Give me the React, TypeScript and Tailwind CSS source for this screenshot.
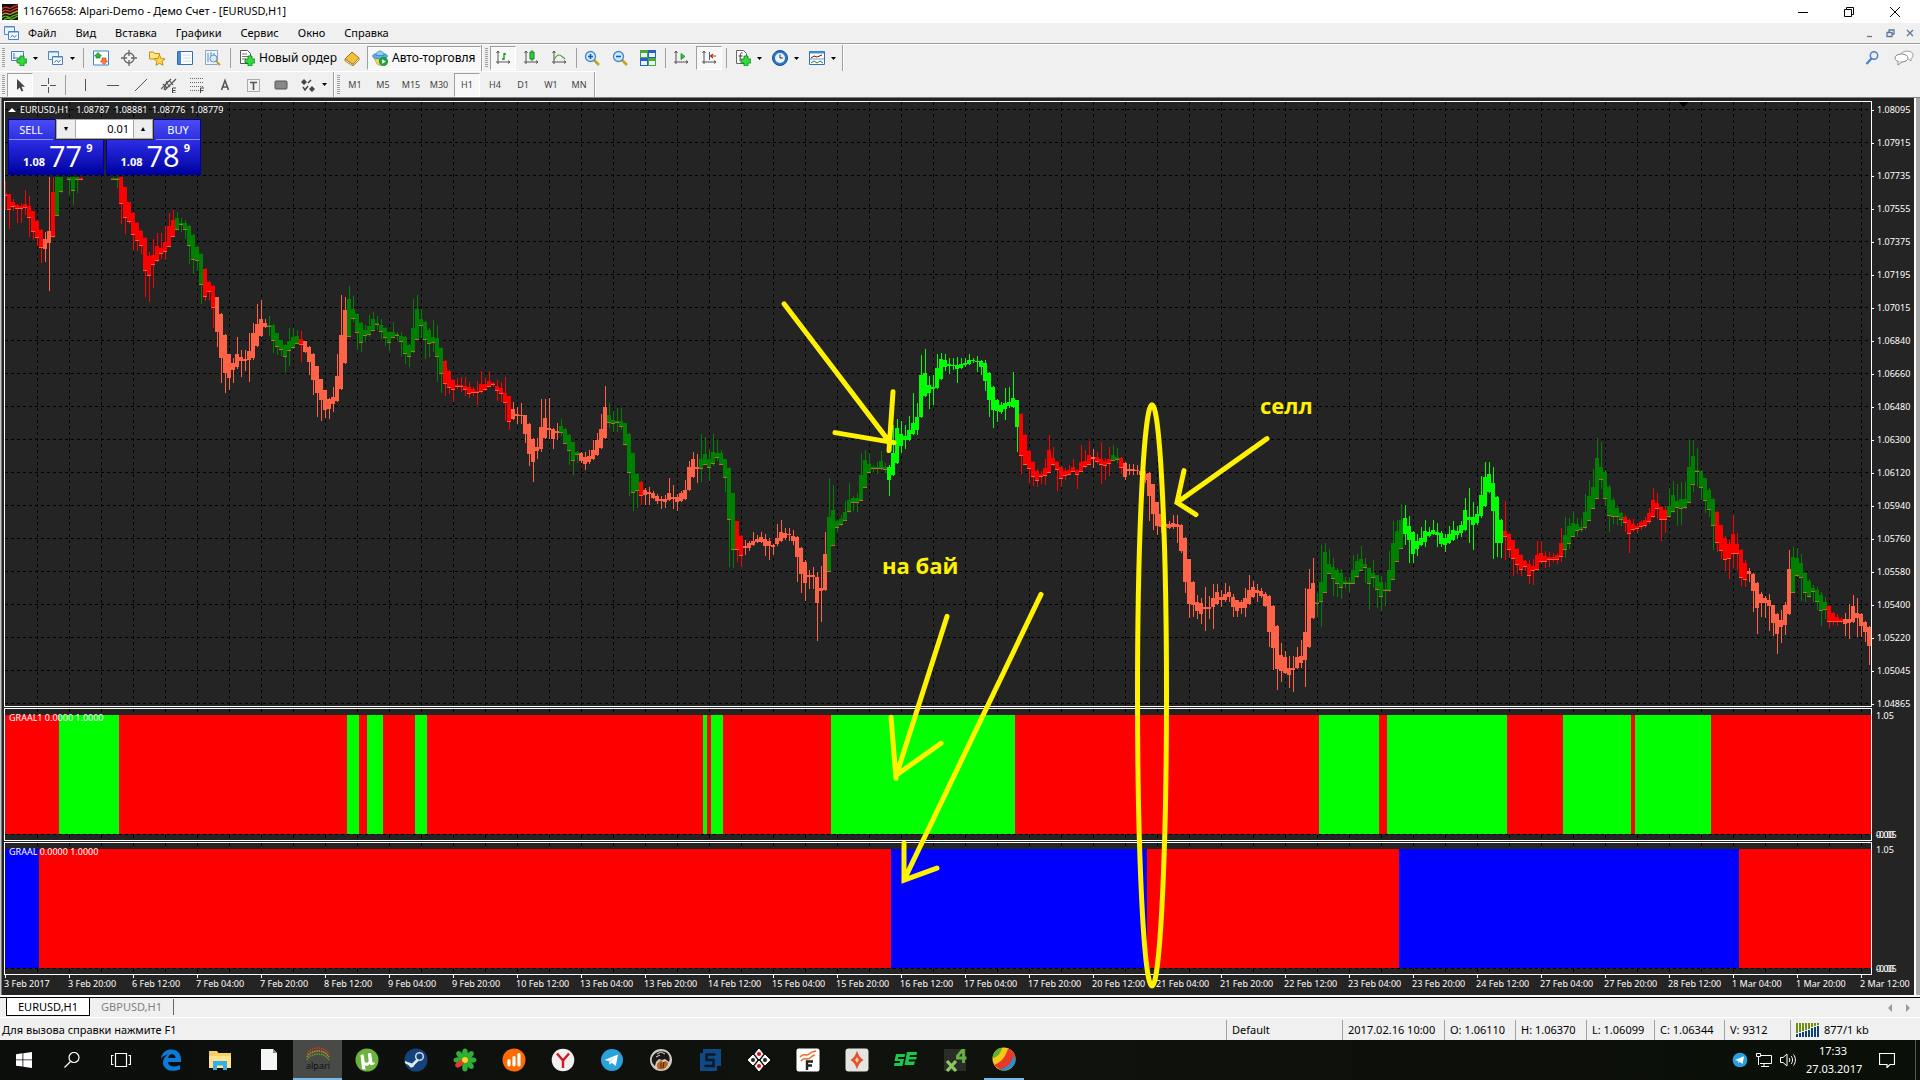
import React from "react";
import clsx from "clsx";

type IconProps = { children: React.ReactNode; className?: string; box?: string };

const Ico: React.FC<IconProps> = ({ children, className = "w-4 h-4", box = "0 0 16 16" }) => (
  <svg className={clsx("shrink-0", className)} viewBox={box} fill="none" aria-hidden="true">
    {children}
  </svg>
);

/* ---------- price data ---------- */

const COLORS = { R: "#ff0000", T: "#ff6347", G: "#008000", L: "#00ff00" };
type Tone = keyof typeof COLORS;

// tone, x of the first bar, then high / body top / body bottom / low for every bar
const RUNS: [Tone, number, string][] = [
  ["R", 5, "181 193 195 210,194 194 209 229,199 202 206 211,204 205 208 223,203 206 208 223,190 204 207 215,196 206 217 237,211 211 231 240,220 221 237 246,229 230 247 263"],
  ["T", 45, "232 239 249 262,177 231 243 291"],
  ["R", 53, "178 192 236 238"],
  ["G", 57, "177 177 215 216,177 177 191 193"],
  ["G", 69, "177 177 179 195,177 177 190 205,177 177 179 193"],
  ["R", 81, "177 178 179 179"],
  ["G", 113, "177 178 179 180,177 178 179 188"],
  ["R", 121, "177 177 203 224,187 187 217 234,202 202 221 224,212 213 234 250,222 223 240 251,230 231 245 254,237 238 270 297,252 256 275 302,239 255 264 288,233 246 260 262,233 248 253 259,226 242 251 260,213 226 246 247,210 220 236 237"],
  ["G", 177, "212 218 229 230,218 223 224 232,220 223 229 239,225 226 245 264,234 235 259 274,246 247 260 271,253 254 284 304"],
  ["R", 205, "268 269 296 301,281 282 291 300,285 286 307 328"],
  ["T", 217, "297 297 332 347,313 314 358 383,334 335 373 393,354 354 378 390,358 363 370 383,337 354 367 369,350 357 361 377,350 359 361 371,333 351 360 382,323 333 358 360,304 324 346 347,300 319 336 337,319 323 327 328"],
  ["G", 269, "316 325 326 336,324 325 340 353,333 333 346 355,340 340 349 356,344 345 356 372,328 341 350 366,328 337 347 349,330 336 343 344"],
  ["R", 301, "331 339 344 362"],
  ["T", 305, "341 341 352 353,346 347 362 375,353 354 380 395,366 366 393 417,379 379 400 421,390 390 410 418,398 399 409 419,387 397 404 412,354 376 401 402,295 335 389 390,297 310 363 364"],
  ["G", 349, "286 299 336 337,296 309 318 322,313 314 332 350,322 323 342 352,325 330 335 342,315 326 334 337,312 319 330 331,316 323 324 330,319 325 331 339,327 328 337 346,331 332 342 351,322 332 337 338,332 334 335 341,332 336 341 356,336 337 353 364,344 345 356 367,299 328 351 353,295 309 339 340,309 319 325 338,321 322 339 359,328 330 343 357,320 337 342 352,325 338 356 382,347 348 373 393"],
  ["R", 445, "360 361 383 396,370 371 387 394,379 380 389 402,378 385 386 389,377 385 386 392,377 386 389 396,382 387 393 398,387 389 392 396,381 391 392 405,371 384 391 394,378 384 389 391,371 381 386 387,382 383 384 387,380 386 390 401,382 388 393 402,377 393 402 421,396 396 421 430"],
  ["T", 513, "402 409 419 420,407 414 416 424,403 415 416 424,415 415 434 443,423 424 454 466,438 439 462 482,438 447 451 459,399 427 449 452,399 418 438 439,398 428 430 439,428 429 439 449,423 431 433 440"],
  ["G", 561, "419 426 432 436,428 429 443 444,434 435 450 465,442 442 460 475,451 452 454 463"],
  ["T", 581, "452 453 461 463,452 457 464 470,450 456 462 464,440 450 459 460,433 440 455 456,414 429 448 449,386 407 438 439"],
  ["G", 609, "403 415 422 428,411 420 423 432,408 421 422 432,408 421 426 430,423 423 444 446,433 434 472 496,453 453 492 511,473 474 490 508"],
  ["R", 641, "481 482 495 505"],
  ["T", 645, "488 490 495 505,487 492 494 505,491 493 498 499,494 496 501 504,496 499 501 509,495 499 502 508,478 493 500 501,485 497 499 509,494 497 502 511,491 493 501 502,480 490 499 500,461 467 490 491,452 459 477 478,454 467 469 483"],
  ["G", 701, "434 459 468 482,437 454 464 465,450 459 467 481,434 452 463 466,440 453 457 461,450 453 464 465,459 459 477 492,467 468 519 567,493 493 549 568"],
  ["R", 737, "521 521 549 562,535 536 555 567"],
  ["T", 745, "540 546 548 555,541 543 548 551,532 541 545 546,535 539 542 543,532 537 542 543,534 539 546 556,538 541 546 560,544 545 547 555,524 538 544 546,520 532 541 542,528 533 538 540,528 534 535 541,530 536 541 545,536 537 557 582,547 548 574 593,560 562 583 601,570 575 577 589,567 575 577 589,572 577 603 641,566 588 591 622,532 554 590 591"],
  ["G", 829, "478 517 571 572,485 510 545 546,520 521 527 532,515 519 524 526,501 512 520 521,483 500 511 513,496 498 502 511,493 498 502 512,453 475 500 501,450 460 487 488,453 464 472 473,465 467 468 472,462 467 468 474,451 461 468 470,463 467 469 473"],
  ["L", 889, "465 467 480 496,425 453 475 476,419 428 463 464,421 434 446 453,425 436 440 449,416 430 440 441,393 423 434 435,403 417 430 435,355 375 417 418,349 373 396 397,376 385 393 409,375 387 389 405,354 368 388 389,353 359 379 380,354 360 367 371,358 364 366 374,358 365 366 370,357 365 369 383,358 364 368 369,358 363 365 367,354 360 364 365,358 360 361 363,356 361 362 372,360 361 367 375,360 363 381 391,372 373 400 417,386 387 410 428,399 400 411 422,402 405 412 414,388 403 409 420,387 402 406 408,372 398 407 408,400 400 427 452"],
  ["R", 1021, "413 414 455 474,434 435 464 465,450 451 468 483,461 462 476 486,469 471 480 487,471 474 476 484,459 468 475 485,435 450 472 473,447 458 464 466,461 462 469 491,466 467 478 487,468 471 475 480,465 470 474 475,459 467 471 472,469 470 474 489,445 462 471 472,450 461 466 468,441 455 464 465"],
  ["T", 1093, "449 457 459 468"],
  ["R", 1097, "452 457 461 464,442 459 464 484,458 461 465 480,447 459 463 476"],
  ["G", 1113, "445 455 460 461,448 457 459 463"],
  ["R", 1121, "457 458 467 474"],
  ["T", 1125, "462 463 477 480,464 469 471 475,464 469 471 475,465 470 471 475,463 471 475 479,471 474 480 483,472 473 496 521,484 484 514 530,502 502 526 535,513 514 527 533,517 524 527 533,521 524 528 529,515 523 527 529,515 524 527 543,524 525 551 553,537 538 582 593,559 559 604 618,581 582 605 617,595 602 611 619,598 603 614 624,587 607 609 631,596 607 609 619,584 598 607 629,584 592 604 605,590 597 600 607,583 594 600 602,586 592 597 602,594 597 607 617,600 600 611 617,600 602 608 614,588 598 608 617,575 590 604 605,581 587 597 598,584 590 593 602,588 591 596 598,592 594 606 607,595 596 632 647,605 606 648 670,625 626 669 690,643 655 671 682,651 657 673 674,656 668 675 688,656 668 670 692,647 657 668 669,640 656 663 668,588 632 660 687,569 589 647 648,558 583 618 619"],
  ["G", 1317, "593 602 603 617,545 582 601 627,543 552 592 593,549 564 573 574,558 567 578 596,568 570 583 597,569 573 587 599,577 581 583 588,577 582 583 592,555 570 583 584,554 561 576 578,546 559 570 571,558 564 567 583,567 568 583 610,560 573 577 588,575 575 589 608,576 582 596 611,582 589 590 606,551 570 590 592,521 543 579 580,520 531 561 562,504 520 548 549"],
  ["L", 1405, "505 518 534 545,516 526 540 563,531 532 554 563,534 541 549 556,527 538 545 546,520 531 542 547,527 532 536 537,520 530 534 535,523 532 535 547,531 533 544 547,534 538 545 552,526 534 543 544,521 530 540 541,526 531 535 539,521 525 533 537,498 510 530 531,488 517 520 543,502 517 525 550,506 514 523 525,476 495 516 518,462 477 506 507,462 474 492 493,467 483 511 559,496 497 543 557,519 520 543 558"],
  ["R", 1505, "501 531 536 560,533 534 549 558,540 540 558 576,548 549 564 574,554 555 569 576,560 561 566 571,560 564 575 584,559 566 570 585,541 555 569 571,541 553 561 564,551 556 561 568,552 557 559 567,553 557 559 562,553 555 559 564,528 543 556 562"],
  ["G", 1565, "517 535 549 558,518 526 543 549,511 523 536 537,518 524 530 537,519 527 529 532,494 512 527 530,480 496 520 521,469 487 508 509,438 458 498 499,442 467 479 489,470 472 498 506,485 487 515 532,498 500 516 524,506 508 516 525,512 513 519 526"],
  ["R", 1625, "515 517 522 532,519 520 533 553,519 524 529 532,523 526 528 533,520 522 526 530,517 520 525 528,508 513 521 524,488 500 516 518,493 503 508 519,506 507 519 541,506 510 519 533"],
  ["G", 1669, "488 506 516 518,481 495 511 513,484 501 507 526,482 499 508 525,482 499 507 509,440 467 502 503,440 456 484 492,448 470 471 487,470 471 487 500,478 478 500 513,488 490 509 517,498 499 525 550"],
  ["R", 1717, "511 512 542 552,525 525 550 559,536 538 559 571,539 544 558 579,515 534 553 568,533 544 553 570,549 550 577 586,560 563 579 587"],
  ["T", 1749, "568 571 574 582,573 574 591 612,582 583 608 634,592 594 603 617,596 598 603 618,594 600 606 631,605 605 623 636,613 614 634 654,610 620 627 643,602 605 625 635,550 569 614 615"],
  ["G", 1793, "547 557 592 593,548 558 575 577,554 563 577 601,572 573 592 602,579 581 596 598,585 588 591 602,587 590 601 610,592 595 610 626,597 602 609 619"],
  ["R", 1829, "605 606 621 628,612 613 621 625,614 617 621 626,617 619 621 623"],
  ["T", 1845, "613 619 624 636,604 619 623 639,595 606 622 623,598 613 618 637,613 614 626 637,621 622 632 642,626 627 646 665"],
];

const BARS = RUNS.flatMap(([tone, start, data]) =>
  data.split(",").map((bar, i) => {
    const [high, top, bottom, low] = bar.split(" ").map(Number);
    return { tone, x: start + i * 4, high, top, bottom, low };
  })
);

const GRID_X = Array.from({ length: 58 }, (_, i) => 37 + i * 32);
const GRID_Y = Array.from({ length: 19 }, (_, i) => 109 + i * 33);

const PRICES = [
  "1.08095", "1.07915", "1.07735", "1.07555", "1.07375", "1.07195", "1.07015", "1.06840", "1.06660", "1.06480",
  "1.06300", "1.06120", "1.05940", "1.05760", "1.05580", "1.05400", "1.05220", "1.05045", "1.04865",
];

const TIMES = [
  "3 Feb 2017", "3 Feb 20:00", "6 Feb 12:00", "7 Feb 04:00", "7 Feb 20:00", "8 Feb 12:00", "9 Feb 04:00", "9 Feb 20:00",
  "10 Feb 12:00", "13 Feb 04:00", "13 Feb 20:00", "14 Feb 12:00", "15 Feb 04:00", "15 Feb 20:00", "16 Feb 12:00",
  "17 Feb 04:00", "17 Feb 20:00", "20 Feb 12:00", "21 Feb 04:00", "21 Feb 20:00", "22 Feb 12:00", "23 Feb 04:00",
  "23 Feb 20:00", "24 Feb 12:00", "27 Feb 04:00", "27 Feb 20:00", "28 Feb 12:00", "1 Mar 04:00", "1 Mar 20:00", "2 Mar 12:00",
];

const GRAAL1: [number, number][] = [
  [59, 119], [347, 359], [367, 383], [415, 427], [703, 707], [711, 723], [831, 1015],
  [1319, 1379], [1387, 1507], [1563, 1631], [1635, 1711],
];
const GRAAL: [number, number][] = [[5, 39], [891, 1147], [1399, 1739]];

/* ---------- chart ---------- */

const PriceChart = () => (
  <svg className="block w-full h-[604px]" viewBox="5 102 1866 604" preserveAspectRatio="none" shapeRendering="crispEdges">
    <g stroke="#000" strokeDasharray="3 3">
      {GRID_X.map((x) => (
        <path key={x} d={`M${x + 0.5} 102V706`} />
      ))}
      {GRID_Y.map((y) => (
        <path key={y} d={`M5 ${y + 0.5}H1871`} />
      ))}
    </g>
    <path d="M1679 102h9l-4.500 5z" fill="#000" />
    {BARS.map((b) => (
      <g key={b.x} fill={COLORS[b.tone]}>
        <rect x={b.x} y={b.high} width="1" height={b.low - b.high} />
        <rect x={b.x - 2} y={b.top} width="4" height={Math.max(1, b.bottom - b.top)} />
        {(b.tone === "G" || b.tone === "R") && (
          <rect x={b.x - 2} y={b.bottom} width="4" height="1" fill={b.tone === "G" ? "#b07030" : "#ff5a3c"} />
        )}
      </g>
    ))}
  </svg>
);

type PaneProps = { name: string; base: string; mark: string; zones: [number, number][] };

const IndicatorPane: React.FC<PaneProps> = ({ name, base, mark, zones }) => (
  <div className="flex h-[133px] mt-px">
    <div className="relative flex-1 border border-white">
      <svg className="block w-full h-[131px]" viewBox="5 0 1866 131" preserveAspectRatio="none" shapeRendering="crispEdges">
        <g stroke="#000" strokeDasharray="3 3">
          {GRID_X.map((x) => (
            <path key={x} d={`M${x + 0.5} 0V131`} />
          ))}
          <path d="M5 125.500H1871" />
        </g>
        <rect x="5" y="6" width="1866" height="119" fill={base} />
        {zones.map(([from, to]) => (
          <rect key={from} x={from} y="6" width={to - from} height="119" fill={mark} />
        ))}
      </svg>
      <span className="absolute left-1 top-px text-[9px] leading-4">{name} 0.0000 1.0000</span>
    </div>
    <div className="w-[42px] flex flex-col justify-between pt-0.5 text-[9px] leading-3 pl-1">
      <span>1.05</span>
      <span className="grid">
        <span className="[grid-area:1/1]">0.00</span>
        <span className="[grid-area:1/1]">-0.05</span>
      </span>
    </div>
  </div>
);

const Annotations = () => (
  <div className="absolute inset-0 pointer-events-none text-[#fff200]">
    <svg className="w-full h-full" viewBox="0 97 1920 898" preserveAspectRatio="none" fill="none" stroke="#fff200" strokeWidth="5" strokeLinecap="round">
      <path d="M784 303L890 442M893 391L889 450M835 432L894 442" />
      <path d="M1267 438L1177 502M1184 470L1177 502L1196 514" />
      <path d="M947 616L896 776M891 717L896 778M896 775L941 743" />
      <path d="M1041 594L904 880M904 843V880L937 868" />
      <ellipse cx="1152" cy="695" rx="14.500" ry="291" />
    </svg>
    <span className="absolute left-[65.620%] top-[293px] text-[22px] leading-7 font-bold font-['Open_Sans',sans-serif]">селл</span>
    <span className="absolute left-[45.940%] top-[453px] text-[22px] leading-7 font-bold font-['Open_Sans',sans-serif]">на бай</span>
  </div>
);

const TradePanel = () => (
  <div className="absolute left-[3px] top-[17px] w-[193px] h-14 grid grid-cols-2 gap-x-0.5 text-white">
    {[
      { side: "SELL", pips: "77" },
      { side: "BUY", pips: "78" },
    ].map(({ side, pips }) => (
      <button
        key={side}
        aria-label={side}
        className="flex flex-col border border-[#0000a8] bg-linear-to-b from-[#4a4af5] via-[#2323d8] to-[#0000a0]"
      >
        <span className={clsx("w-[44px] h-5 text-[11px] leading-5 text-center border-b border-[#8c8cff]", side === "BUY" && "self-end")}>
          {side}
        </span>
        <span className="flex items-end justify-center w-full h-8 gap-1 pl-1">
          <b className="text-[11px] leading-5">1.08</b>
          <span className="text-[29px] leading-8 font-['Open_Sans',sans-serif]">{pips}</span>
          <b className="text-[11px] leading-4 self-start">9</b>
        </span>
      </button>
    ))}
    <div className="absolute left-[47px] top-0 w-[99px] h-[21px] bg-[#242424] px-px pb-px flex text-black">
      <button aria-label="Меньше" className="w-5 bg-[#eee] border border-[#a8a8a8] text-[7px] leading-4">
        ▼
      </button>
      <input aria-label="Объем" defaultValue="0.01" className="w-0 flex-1 bg-white border-y border-[#a8a8a8] text-right text-[11px] pr-1 outline-none" />
      <button aria-label="Больше" className="w-5 bg-[#eee] border border-[#a8a8a8] text-[7px] leading-4">
        ▲
      </button>
    </div>
  </div>
);

const ChartWindow = () => (
  <main className="relative bg-[#242424] text-white border-t border-[#808080] pt-[3px] pr-1.5">
    <div className="absolute left-0 inset-y-0 w-0.5 bg-[#c8c8c8] border-r border-[#777]" />
    <div className="absolute right-0 inset-y-0 w-1.5 bg-[#a9a9a9] border-l-2 border-white" />
    <div className="pl-1">
      <div className="flex h-[606px]">
        <div className="relative flex-1 border border-white">
          <PriceChart />
          <span className="absolute left-[3px] top-0 text-[9px] leading-4 flex items-center gap-1">
            <Ico className="w-2 h-1" box="0 0 8 4">
              <path d="M0 4L4 0l4 4z" fill="#fff" />
            </Ico>
            <span className="whitespace-pre">EURUSD,H1   1.08787  1.08881  1.08776  1.08779</span>
          </span>
          <TradePanel />
        </div>
        <div className="w-[42px] pt-[3px] flex flex-col gap-[21px] text-[9px] leading-3">
          {PRICES.map((p) => (
            <span key={p} className="flex items-center gap-[3px] h-3">
              <i className="w-0.5 h-px bg-white" />
              {p}
            </span>
          ))}
        </div>
      </div>
      <IndicatorPane name="GRAAL1" base="#ff0000" mark="#00ff00" zones={GRAAL1} />
      <IndicatorPane name="GRAAL" base="#ff0000" mark="#0000ff" zones={GRAAL} />
      <div className="grid grid-cols-[repeat(29,minmax(0,64fr))_53fr] h-5 pl-px text-[9px] leading-3 whitespace-nowrap">
        {TIMES.map((t) => (
          <div key={t}>
            <i className="block w-px h-[3px] bg-white" />
            <span className="-ml-px">{t}</span>
          </div>
        ))}
      </div>
    </div>
    <Annotations />
  </main>
);

/* ---------- tool bars ---------- */

const Plus = () => <path d="M9 6h4v3h3v4h-3v3H9v-3H6V9h3z" fill="#2fdc3a" stroke="#12801c" strokeWidth=".8" />;
const Axes = () => <path d="M3 1v13M1 12h14M1.500 3L3 1l1.500 2M13 10.500l2 1.500-2 1.500" stroke="#555" />;

const Caret = () => (
  <Ico className="w-[5px] h-[3px]" box="0 0 5 3">
    <path d="M0 0h5L2.500 3z" fill="#000" />
  </Ico>
);
const Grip = () => <i className="w-[3px] h-5 mx-0.5 shrink-0 bg-[repeating-linear-gradient(#a0a0a0_0_1px,#f0f0f0_1px_2px)]" />;
const Sep = () => <i className="w-px h-5 mx-0.5 shrink-0 bg-[#a0a0a0]" />;
const End = () => <i className="w-0.5 self-stretch shrink-0 border-l border-[#a0a0a0] bg-white" />;

type ToolProps = { label: string; on?: boolean; wide?: boolean; children: React.ReactNode };

const Tool: React.FC<ToolProps> = ({ label, on, wide, children }) => (
  <button
    aria-label={label}
    className={clsx(
      "h-6 shrink-0 flex items-center justify-center gap-1.5 border",
      wide ? "w-[37px] pr-0.5" : "w-[26px] mr-0.5",
      on ? "bg-[#f8f8f8] border-t-[#a0a0a0] border-l-[#a0a0a0] border-white" : "border-transparent"
    )}
  >
    {children}
  </button>
);

const Zoom: React.FC<{ plus?: boolean }> = ({ plus }) => (
  <Ico>
    <path d="M10 10l5 5" stroke="#c8a020" strokeWidth="2.500" />
    <circle cx="6.500" cy="6.500" r="5" fill="#cdeaff" stroke="#4a88c4" strokeWidth="1.300" />
    <path d={plus ? "M4 6.500h5M6.500 4v5" : "M4 6.500h5"} stroke="#1a5fa8" strokeWidth="1.600" />
  </Ico>
);

const Windows: React.FC = () => (
  <Ico>
    <path d="M.5 1.500h10v8H.5z" fill="#eaf4fd" stroke="#5588b8" />
    <path d="M4.500 6.500h10v8h-10z" fill="#f4faff" stroke="#4a80b8" />
    <path d="M1 2.500h9M5 7.500h9" stroke="#9cc4e8" />
    <path d="M6.500 12.500l2-2.500 2 2.500 2-2.500" stroke="#4a80b8" />
  </Ico>
);

const StandardBar = () => (
  <div className="flex items-center h-[27px] border-t border-white text-[12px] text-black">
    <Grip />
    <Tool label="Новый график" wide>
      <Ico>
        <path d="M.5 1.500h12v9H.5z" fill="#eef6ff" stroke="#4a7fb0" />
        <path d="M3 3v6M2 8h8" stroke="#4a7fb0" />
        <Plus />
      </Ico>
      <Caret />
    </Tool>
    <Tool label="Профили" wide>
      <Windows />
      <Caret />
    </Tool>
    <Sep />
    <div className="flex pl-0.5">
      <Tool label="Обзор рынка">
        <Ico>
          <path d="M.5 1h15v14H.5z" fill="#fff" stroke="#3f86c8" />
          <path d="M3 8V6H1.500L5 2.500 8.500 6H7v2z" fill="#2fb83a" stroke="#126b1a" strokeWidth=".6" />
          <path d="M9 8v3H7.500l3.500 3.500 3.500-3.500H13V8z" fill="#ff7a3a" stroke="#b03010" strokeWidth=".6" />
        </Ico>
      </Tool>
      <Tool label="Окно данных">
        <Ico>
          <circle cx="8" cy="8" r="5" stroke="#666" strokeWidth="1.300" />
          <path d="M8 0v6M8 10v6M0 8h6M10 8h6" stroke="#666" strokeWidth="1.300" />
        </Ico>
      </Tool>
      <Tool label="Навигатор">
        <Ico>
          <path d="M.5 2h4l1 1.500h5V9H.5z" fill="#ffe680" stroke="#c09018" />
          <path d="M10.500 5l1.700 3.500 3.800.4-2.800 2.500.8 3.900-3.500-2-3.500 2 .8-3.900L5 8.900l3.800-.4z" fill="#ffd840" stroke="#b07810" strokeWidth=".8" />
        </Ico>
      </Tool>
      <Tool label="Терминал">
        <Ico>
          <path d="M.5 1.500h15v13H.5z" fill="#fff" stroke="#2f6fb0" />
          <path d="M1 2h3v12H1z" fill="#4a8ad0" />
          <path d="M6 5h8M6 8h8M6 11h8" stroke="#c4dcf2" />
        </Ico>
      </Tool>
      <Tool label="Тестер стратегий">
        <Ico>
          <path d="M.5.5h12v14H.5z" fill="#eef4fa" stroke="#8aa8c4" />
          <path d="M3 3v9M6 2v5M9 3v4" stroke="#5588b8" />
          <path d="M11 11l4 4" stroke="#c8a020" strokeWidth="2" />
          <circle cx="8.500" cy="8.500" r="3.500" fill="#d6ecff" stroke="#5a90c0" />
        </Ico>
      </Tool>
    </div>
    <Sep />
    <button className="flex items-center gap-1 w-[104px] pl-1.5 mr-0.5 whitespace-nowrap text-[12px]">
      <Ico>
        <path d="M1.500.5h7l3 3v10h-10z" fill="#fff" stroke="#555" />
        <path d="M3 4h5M3 6.500h6M3 9h4" stroke="#777" />
        <Plus />
      </Ico>
      Новый ордер
    </button>
    <Tool label="MetaEditor">
      <Ico>
        <path d="M1 9l7-7 7 6-6 6.500z" fill="#f0c040" stroke="#a07010" />
        <path d="M1 9v2l8 5v-1.500zM9 16l6-6V8" fill="#fff2c0" stroke="#a07010" strokeWidth=".8" />
      </Ico>
    </Tool>
    <button className="flex items-center gap-1 w-[114px] h-6 px-1 whitespace-nowrap text-[12px] bg-[#f8f8f8] border border-white border-t-[#a0a0a0] border-l-[#a0a0a0]">
      <Ico>
        <path d="M2 8h12l-3 6-3 1.500L5 14z" fill="#f6d860" stroke="#b08a20" strokeWidth=".6" />
        <ellipse cx="8" cy="6" rx="7.500" ry="3" fill="#5ab0e8" stroke="#2a70a8" strokeWidth=".6" />
        <path d="M4 5.500c0-6 8-6 8 0z" fill="#8cd0f6" stroke="#2a70a8" strokeWidth=".6" />
        <circle cx="11.500" cy="11.500" r="4.200" fill="#20a838" stroke="#0f7020" strokeWidth=".6" />
        <path d="M10.200 9.200l3.500 2.300-3.500 2.300z" fill="#fff" />
      </Ico>
      Авто-торговля
    </button>
    <End />
    <Grip />
    <Tool label="Бары" on>
      <Ico>
        <Axes />
        <path d="M9 3v7M9 4h2M7 9h2" stroke="#109020" strokeWidth="1.300" />
      </Ico>
    </Tool>
    <Tool label="Японские свечи">
      <Ico>
        <Axes />
        <path d="M9 0v11" stroke="#108020" />
        <path d="M7 2h4v7H7z" fill="#30d040" stroke="#108020" />
      </Ico>
    </Tool>
    <Tool label="Линия">
      <Ico>
        <Axes />
        <path d="M3 10c3-6 5-7 11-1" stroke="#4a9a50" strokeWidth="1.200" />
      </Ico>
    </Tool>
    <Sep />
    <Tool label="Увеличить">
      <Zoom plus />
    </Tool>
    <Tool label="Уменьшить">
      <Zoom />
    </Tool>
    <Tool label="Окна мозаикой">
      <Ico>
        <path d="M0 0h8v8H0zM8 8h8v8H8z" fill="#4aa83a" />
        <path d="M8 0h8v8H8zM0 8h8v8H0z" fill="#2a5fc8" />
        <path d="M1 3h6v4H1zM9 3h6v4H9zM1 11h6v4H1zM9 11h6v4H9z" fill="#e8f2ff" />
      </Ico>
    </Tool>
    <Sep />
    <Tool label="Автопрокрутка">
      <Ico>
        <Axes />
        <path d="M8 3.500v6l4-3z" fill="#30c040" stroke="#108020" strokeWidth=".7" />
      </Ico>
    </Tool>
    <Tool label="Сдвиг графика" on>
      <Ico>
        <Axes />
        <path d="M8.500 2v8" stroke="#3060a0" />
        <path d="M15 6h-5M12 4l-2.500 2L12 8" stroke="#c03010" strokeWidth="1.200" />
      </Ico>
    </Tool>
    <Sep />
    <div className="flex pl-0.5">
      <Tool label="Индикаторы" wide>
        <Ico>
          <path d="M1.500.5h7l3 3v10h-10z" fill="#fff" stroke="#666" />
          <path d="M7.500 3C5 2 5.500 5 5 11M3.500 6h4" stroke="#333" />
          <Plus />
        </Ico>
        <Caret />
      </Tool>
      <Tool label="Периоды" wide>
        <Ico>
          <circle cx="8" cy="8" r="7.500" fill="#2a78c8" stroke="#10508c" />
          <circle cx="8" cy="8" r="5" fill="#e8f4ff" />
          <path d="M8 4.500V8h3" stroke="#333" />
        </Ico>
        <Caret />
      </Tool>
      <Tool label="Шаблоны" wide>
        <Ico>
          <path d="M.5 1.500h15v13H.5z" fill="#fff" stroke="#2f70b0" />
          <path d="M1 2.500h14" stroke="#4a90d0" strokeWidth="2" />
          <path d="M2 8l3-2 3 1 5-2" stroke="#602010" />
          <path d="M1 9h14" stroke="#2f70b0" strokeWidth=".7" />
          <path d="M2 13l3-2 3 2 3-2 3 2" stroke="#208030" />
        </Ico>
        <Caret />
      </Tool>
    </div>
    <End />
    <div className="flex ml-auto items-center gap-3.5 pr-1.5">
      <button aria-label="Поиск">
        <Ico>
          <circle cx="10" cy="5.500" r="3.700" stroke="#4a80c8" strokeWidth="1.500" />
          <path d="M7.500 8.500L2.500 14" stroke="#4a80c8" strokeWidth="2.200" />
        </Ico>
      </button>
      <button aria-label="Чат">
        <Ico className="w-5 h-4" box="0 0 20 16">
          <path d="M7 4c2-4 12-4 12 1 0 2-1 3-2 3.500V11l-2.500-2" fill="#fff" stroke="#999" />
          <ellipse cx="7.500" cy="8" rx="6.500" ry="4" fill="#fff" stroke="#888" />
          <path d="M4 11v4l4-3" fill="#fff" stroke="#888" />
        </Ico>
      </button>
    </div>
  </div>
);

const DRAWINGS: { label: string; art: React.ReactNode }[] = [
  { label: "Вертикальная линия", art: <path d="M8.500 2v12" stroke="#555" /> },
  { label: "Горизонтальная линия", art: <path d="M2 8.500h12" stroke="#555" /> },
  { label: "Трендовая линия", art: <path d="M2 14L14 2" stroke="#555" /> },
  {
    label: "Канал",
    art: (
      <>
        <path d="M0 12L10 2M4 13L15 2M2 7l4 4M5 5l4 5M8 3l4 5M3 13L6 4" stroke="#555" strokeWidth="1.200" />
        <path d="M15 11h-3.500v5H15M11.500 13.500h3" stroke="#444" />
      </>
    ),
  },
  {
    label: "Фибоначчи",
    art: (
      <>
        <path d="M1 1.500h14M1 5.500h14M1 9.500h14M1 13.500h9" stroke="#666" strokeDasharray="1 1" />
        <path d="M11.500 16v-5H15M11.500 13.500h3" stroke="#444" />
      </>
    ),
  },
  { label: "Текст", art: <path d="M4.500 13L8 3.500 11.500 13M5.500 10h5" stroke="#555" strokeWidth="1.600" /> },
  {
    label: "Текстовая метка",
    art: (
      <>
        <path d="M2.500 2.500h12v12h-12z" stroke="#666" strokeDasharray="1 1" />
        <path d="M5 5.500h7M8.500 5.500V13" stroke="#555" strokeWidth="1.600" />
      </>
    ),
  },
  { label: "Прямоугольник", art: <rect x="2" y="4" width="12" height="8" rx="1" fill="#888" stroke="#555" /> },
];

const PERIODS = ["M1", "M5", "M15", "M30", "H1", "H4", "D1", "W1", "MN"];

const LineBar = () => (
  <div className="flex h-[26px]">
    <div className="flex items-center border-t border-white">
      <Grip />
      <Tool label="Курсор" on>
        <Ico>
          <path d="M5 2v11l2.700-2.500 1.800 4 1.800-.8-1.800-3.900H13z" fill="#444" />
        </Ico>
      </Tool>
      <Tool label="Перекрестие">
        <Ico>
          <path d="M8.500 1v6M8.500 10v6M1 8.500h6M10 8.500h6" stroke="#555" />
        </Ico>
      </Tool>
      <Sep />
      <div className="flex pl-1">
        {DRAWINGS.map((d) => (
          <Tool key={d.label} label={d.label}>
            <Ico>{d.art}</Ico>
          </Tool>
        ))}
        <Tool label="Стрелки" wide>
          <Ico>
            <path d="M1 5l3-3 3 3-3 3zM9 12l3-3 3 3-3 3z" fill="#444" />
            <path d="M3 10l2 3 3-4M8 6l3-3" stroke="#444" strokeWidth="1.500" />
          </Ico>
          <Caret />
        </Tool>
      </div>
      <End />
      <Grip />
      {PERIODS.map((p) => (
        <Tool key={p} label={p} on={p === "H1"}>
          <span className="text-[9px] text-[#444]">{p}</span>
        </Tool>
      ))}
      <End />
    </div>
  </div>
);

/* ---------- window frame ---------- */

const MENU = ["Файл", "Вид", "Вставка", "Графики", "Сервис", "Окно", "Справка"];

const TitleBar = () => (
  <header className="flex items-center h-[23px] px-0.5 bg-white text-black text-[11px]">
    <Ico>
      <path d="M0 0h16v16H0z" fill="#111" />
      <path d="M0 5c4-5 6 1 9-1s4-2 7-3M0 8c4-5 6 1 9-1s4-2 7-3" stroke="#e03020" strokeWidth="1.400" />
      <path d="M0 11c4-5 6 1 9-1s4-2 7-3" stroke="#c8a020" strokeWidth="1.400" />
      <path d="M0 14c4-5 6 1 9-1s4-2 7-3M2 16c4-4 6 0 8-1s4-2 6-3" stroke="#50b020" strokeWidth="1.400" />
    </Ico>
    <h1 className="ml-[5px]">11676658: Alpari-Demo - Демо Счет - [EURUSD,H1]</h1>
    <div className="flex ml-auto">
      <button aria-label="Свернуть" className="w-[46px] flex justify-center">
        <Ico className="w-2.5 h-2.5" box="0 0 10 10">
          <path d="M0 5.500h10" stroke="#000" />
        </Ico>
      </button>
      <button aria-label="Восстановить" className="w-[46px] flex justify-center">
        <Ico className="w-2.5 h-2.5" box="0 0 10 10">
          <path d="M.5 2.500h7v7h-7zM2.500 2.500v-2h7v7h-2" stroke="#000" />
        </Ico>
      </button>
      <button aria-label="Закрыть" className="w-[46px] flex justify-center">
        <Ico className="w-2.5 h-2.5" box="0 0 10 10">
          <path d="M0 0l10 10M10 0L0 10" stroke="#000" />
        </Ico>
      </button>
    </div>
  </header>
);

const MenuBar = () => (
  <nav className="flex items-center h-[21px] pl-1 border-b border-[#a0a0a0] text-[11px] text-black">
    <Windows />
    <div className="flex gap-[19px] ml-2">
      {MENU.map((m) => (
        <a key={m} href="#">
          {m}
        </a>
      ))}
    </div>
    <div className="flex gap-2.5 ml-auto pr-1">
      {["M1 8.500h5", "M1 4.500h5v4H1zM3 4V2h5v4H6", "M1 2l6 6M7 2L1 8"].map((d) => (
        <button key={d} aria-label="Окно графика">
          <Ico className="w-2.5 h-2.5" box="0 0 10 10">
            <path d={d} stroke="#5a7a98" strokeWidth="1.300" />
          </Ico>
        </button>
      ))}
    </div>
  </nav>
);

const ChartTabs = () => (
  <div className="flex items-start h-[23px] border-t-2 border-b border-white text-[11px]">
    <div className="flex items-start w-full h-5 border-t border-black pl-1.5">
      <button className="w-[84px] h-[18px] leading-4 bg-white text-black border border-t-0 border-black">EURUSD,H1</button>
      <button className="w-[84px] h-4 my-px leading-4 text-[#808080] border-r border-[#666]">GBPUSD,H1</button>
      <div className="flex gap-3.5 ml-auto pr-2.5 self-center">
        <Ico className="w-1 h-2" box="0 0 4 8">
          <path d="M4 0v8L0 4z" fill="#999" />
        </Ico>
        <Ico className="w-1 h-2" box="0 0 4 8">
          <path d="M0 0v8l4-4z" fill="#999" />
        </Ico>
      </div>
    </div>
  </div>
);

const StatusBar = () => (
  <div className="flex items-end h-[22px] pl-0.5 text-[11px] leading-5 text-black whitespace-nowrap">
    <span className="flex-1">Для вызова справки нажмите F1</span>
    <span className="w-[116px] pl-[5px] border-l border-[#a0a0a0]">Default</span>
    <span className="w-[102px] pl-[5px] border-l border-[#a0a0a0]">2017.02.16 10:00</span>
    <span className="w-[71px] pl-[5px] border-l border-[#a0a0a0]">O: 1.06110</span>
    <span className="w-[71px] pl-[5px] border-l border-[#a0a0a0]">H: 1.06370</span>
    <span className="w-[68px] pl-[5px] border-l border-[#a0a0a0]">L: 1.06099</span>
    <span className="w-[70px] pl-[5px] border-l border-[#a0a0a0]">C: 1.06344</span>
    <span className="w-[66px] pl-[5px] border-l border-[#a0a0a0]">V: 9312</span>
    <span className="w-[130px] pl-[5px] border-l border-[#a0a0a0] flex items-center gap-1">
      <Ico className="w-6 h-3.5" box="0 0 24 14">
        <path d="M1 0v10M4 0v9M7 0v8M10 0v7M13 0v6M16 0v4M19 0v3M22 0v2" stroke="#6f8f10" strokeWidth="2" />
        <path d="M1 11v3M4 10v4M7 9v5M10 8v6M13 7v7M16 5v9M19 4v10M22 3v11" stroke="#10407a" strokeWidth="2" />
      </Ico>
      877/1 kb
    </span>
  </div>
);

/* ---------- task bar ---------- */

const Telegram: React.FC<{ className?: string }> = ({ className = "w-6 h-6" }) => (
  <Ico className={className} box="0 0 24 24">
    <circle cx="12" cy="12" r="11" fill="#2aa1dc" />
    <path d="M4.500 12L18 6.500 15.800 18l-4.300-3.200-2 2-.6-3.800z" fill="#fff" />
    <path d="M8.900 13l6.600-4.300-5 5.300-.9 2.800z" fill="#c4dff0" />
  </Ico>
);

const APPS: { label: string; art: React.ReactNode }[] = [
  {
    label: "Edge",
    art: <path d="M2 11C3 4 7 1.500 12.500 1.500 18 1.500 22 5.500 22 11v3H9c.3 3 3 4.500 6 4.500 2.500 0 4.500-.6 6-1.500v4.200c-2 1-4.500 1.600-7.500 1.600C7.500 22.800 4 19 4 14.500c0-3.500 2-6.500 5-8C5.500 7 3.500 8.500 2 11zm7.200-1h7.300c0-2.500-1.300-3.800-3.500-3.800S9.500 7.500 9.200 10z" fill="#0c7bd8" fillRule="evenodd" />,
  },
  {
    label: "Проводник",
    art: (
      <>
        <path d="M1 3h8l1.500 2H23v15H1z" fill="#f5cf68" />
        <path d="M1 8h22v12H1z" fill="#ffe391" />
        <path d="M5 22v-9h14v9h-4v-4.500H9V22z" fill="#36b0e4" />
      </>
    ),
  },
  {
    label: "Документ",
    art: (
      <>
        <path d="M4 1h12l4 4v17H4z" fill="#f6f6f6" />
        <path d="M16 1l4 4h-4z" fill="#8a8a8a" />
      </>
    ),
  },
  {
    label: "Alpari",
    art: (
      <>
        <path d="M1 7C5-1 19-1 23 7" stroke="#c83a20" strokeWidth="1.500" strokeDasharray="1.500 .8" />
        <path d="M1 10C5 2 19 2 23 10" stroke="#d09020" strokeWidth="1.500" strokeDasharray="1.500 .8" />
        <path d="M1 13C5 5 19 5 23 13" stroke="#60a020" strokeWidth="1.500" strokeDasharray="1.500 .8" />
        <text x="12" y="22" fontSize="9" textAnchor="middle" fill="#111">
          alpari
        </text>
      </>
    ),
  },
  {
    label: "uTorrent",
    art: (
      <>
        <circle cx="12" cy="12" r="11.500" fill="#6cb33e" />
        <path d="M7 21L5.500 7l3-.7 1.200 7c.4 2.400 4.200 1.700 3.900-.7L12.800 5.500l3.300-.6 1.100 8c.3 1.700 1.200 2 2.600 1.700-.3 3-4 3.600-5.300 1.300-1.200 2-3.300 2.200-4.600 1.300l.7 4.600z" fill="#fff" />
      </>
    ),
  },
  {
    label: "Steam",
    art: (
      <>
        <circle cx="12" cy="12" r="11.500" fill="#14427a" />
        <circle cx="15.500" cy="8.500" r="3.800" stroke="#c8d4e0" strokeWidth="1.600" />
        <path d="M1 13l7 2.500 5-5 2 2-4.500 4.500c-.5 3-4.500 3.500-5.500.5L.8 15z" fill="#dfe7ee" />
      </>
    ),
  },
  {
    label: "ICQ",
    art: (
      <>
        <g fill="#2fae3a">
          <ellipse cx="12" cy="5" rx="2.800" ry="4.500" />
          <ellipse cx="12" cy="5" rx="2.800" ry="4.500" transform="rotate(45 12 12)" />
          <ellipse cx="12" cy="5" rx="2.800" ry="4.500" transform="rotate(90 12 12)" />
          <ellipse cx="12" cy="5" rx="2.800" ry="4.500" transform="rotate(135 12 12)" />
          <ellipse cx="12" cy="5" rx="2.800" ry="4.500" transform="rotate(180 12 12)" />
          <ellipse cx="12" cy="5" rx="2.800" ry="4.500" transform="rotate(270 12 12)" />
          <ellipse cx="12" cy="5" rx="2.800" ry="4.500" transform="rotate(315 12 12)" />
        </g>
        <ellipse cx="12" cy="5" rx="2.800" ry="4.500" transform="rotate(235 12 12)" fill="#e03a34" />
        <circle cx="12" cy="12" r="3" fill="#ffd820" />
      </>
    ),
  },
  {
    label: "Статистика",
    art: (
      <>
        <circle cx="12" cy="12" r="11.500" fill="#ff6a00" />
        <path d="M7 12.500V17M12 9.500V17M17 6.500V17" stroke="#fff" strokeWidth="3.200" strokeLinecap="round" />
      </>
    ),
  },
  {
    label: "Яндекс",
    art: (
      <>
        <circle cx="12" cy="12" r="11.300" fill="#f0f0f0" />
        <path d="M6 5.500l6 7v7.500M18 5.500l-6 7" stroke="#d8141e" strokeWidth="2.400" />
      </>
    ),
  },
  { label: "Telegram", art: null },
  {
    label: "Игра",
    art: (
      <>
        <circle cx="12" cy="12" r="11" fill="#cfcbc4" />
        <path d="M3 10C5 3 15 1 19 6c2 3 2 5 1 8l-4-3-3 1-3-1-3 3-1 4c-2-2-4-4-3-8z" fill="#1a1714" />
        <path d="M8 6l4-2 4 2M7 9l4-2" stroke="#d8d4cc" />
        <path d="M9 21c-2-3-1-6 1-7l2-2 2 2 3-1 2 2c0 3-3 6-6 6.500z" fill="#b8641e" />
        <path d="M12 15v5M15 14l-1 6" stroke="#4a2408" />
      </>
    ),
  },
  {
    label: "S5",
    art: (
      <>
        <path d="M5 1h18v17h-4v5H2V5h3z" fill="#0f4a86" />
        <path d="M17.500 6.500h-9v5.500h7v6h-9" stroke="#0a1828" strokeWidth="2.500" />
      </>
    ),
  },
  {
    label: "Покер",
    art: (
      <>
        <path d="M12 1l4 5-4 5-4-5zM12 13l4 5-4 5-4-5zM6 7l4 5-4 5-5-5zM18 7l5 5-5 5-4-5z" fill="#f8f8f8" stroke="#f8f8f8" />
        <circle cx="12" cy="6" r="2" fill="#d01020" />
        <circle cx="12" cy="18" r="2" fill="#d01020" />
        <circle cx="6" cy="12" r="2" fill="#222" />
        <circle cx="18" cy="12" r="2" fill="#222" />
      </>
    ),
  },
  {
    label: "Forex",
    art: (
      <>
        <rect x=".5" y=".5" width="23" height="23" rx="2" fill="#fff" />
        <path d="M4 9c4-5 6 0 9-3s4-2 7-3M5 13c3-5 6 0 9-3s3-2 5-3" stroke="#f07030" strokeWidth="1.600" />
        <path d="M11 22V13.500h6M11 17.500h5" stroke="#222" strokeWidth="2.400" />
      </>
    ),
  },
  {
    label: "Торговля",
    art: (
      <>
        <rect x=".5" y=".5" width="23" height="23" rx="3" fill="#e6e4e2" />
        <path d="M12 2.500c1.500 5 3 7 6.500 9.500-3.500 2.500-5 4.500-6.500 9.500-1.500-5-3-7-6.500-9.500 3.500-2.500 5-4.500 6.500-9.500z" fill="#e0522a" />
        <path d="M12 9l2 3-2 3-2-3z" fill="#f6c0a8" />
      </>
    ),
  },
  {
    label: "Сервер",
    art: (
      <path
        d="M2 6h9l-.5 3H4.500L4 11h6L8.500 18H0l.5-3h5l.5-2H.500zM13 4h10l-.5 3h-6.500l-.5 2h7.500L22 11.500h-7l-.4 2H21L20 17h-9.500l1-5z"
        fill="#1cc84a"
      />
    ),
  },
  {
    label: "FX4",
    art: (
      <>
        <path d="M1 1h22v22H1z" fill="#2a2c2a" />
        <path d="M20.500 1v14M19.500 2l-5 6v2h9" stroke="#68b040" strokeWidth="2.800" />
        <path d="M4 13l9 10M13 13L4 23" stroke="#8cc860" strokeWidth="3.200" />
      </>
    ),
  },
  {
    label: "Картинки",
    art: (
      <>
        <circle cx="12" cy="12" r="11.500" fill="#f6c818" />
        <path d="M2 18C8 16 14 10 16 1.200c5 2 8 7 7.400 12C20 19 14 23 8 22.800z" fill="#e83828" />
        <path d="M7 22.500c7-1 13-6 14.500-14.300 2 3 2.200 6 1.700 8C20 22 13 25 7 22.500z" fill="#2890d0" />
        <path d="M.6 11C4 11 9 7 10 .8 5 1 1 5 .6 11z" fill="#60b030" />
      </>
    ),
  },
];

const TaskBar = () => (
  <footer className="flex items-center h-10 mt-auto text-white bg-linear-to-r from-[#0b0e0b] via-[#10120d] to-[#0a0f08]">
    <button aria-label="Пуск" className="w-12 flex justify-center">
      <Ico>
        <path d="M0 2.200l6.500-.9v6.200H0zM7.300 1.200L16 0v7.500H7.300zM0 8.300h6.500v6.300L0 13.700zM7.300 8.300H16V16l-8.700-1.300z" fill="#fff" />
      </Ico>
    </button>
    <button aria-label="Поиск" className="w-12 flex justify-center">
      <Ico>
        <circle cx="10" cy="5.500" r="5" stroke="#fff" strokeWidth="1.200" />
        <path d="M6.500 9.500L.5 15.500" stroke="#fff" strokeWidth="1.300" />
      </Ico>
    </button>
    <button aria-label="Представление задач" className="w-[50px] flex justify-center">
      <Ico className="w-5 h-4" box="0 0 20 16">
        <path d="M4.500 1.500h11v13h-11zM2.500 3.500H.5v9h2M17.500 3.500h2v9h-2" stroke="#fff" strokeWidth="1.200" />
      </Ico>
    </button>
    {APPS.map(({ label, art }) => (
      <button
        key={label}
        aria-label={label}
        className={clsx(
          "w-[49px] h-10 flex items-center justify-center",
          label === "Alpari" && "bg-[#474a46] border-b-2 border-[#76b9ed]"
        )}
      >
        <span className={clsx("h-10 flex items-center px-2", label === "Картинки" && "border-b-2 border-[#76b9ed]")}>
          {art ? (
            <Ico className="w-6 h-6" box="0 0 24 24">
              {art}
            </Ico>
          ) : (
            <Telegram />
          )}
        </span>
      </button>
    ))}
    <div className="flex items-center ml-auto h-full">
      <div className="flex items-center gap-2 mr-2.5">
        <Telegram className="w-4 h-4" />
        <Ico>
          <path d="M4 3.500h11.500v8H4M8 11.500v3M5 14.500h8M.5 1.500h4v3h-4zM2.500 5v8" stroke="#fff" />
        </Ico>
        <Ico>
          <path d="M.5 5.500h2.500L7 2v12l-4-3.500H.5zM9 6c1 1 1 3 0 4M11 4c2 2 2 6 0 8M13.500 2.500c2.500 3 2.500 8 0 11" stroke="#fff" />
        </Ico>
      </div>
      <time className="w-[54px] text-[11px] leading-[18px] text-center">
        17:33
        <br />
        27.03.2017
      </time>
      <button aria-label="Центр уведомлений" className="ml-[19px] mr-5">
        <Ico>
          <path d="M.5 1.500h15v11H11L8 15.500 8 12.500H.5z" stroke="#fff" strokeWidth="1.200" />
        </Ico>
      </button>
      <i className="h-full w-[5px] border-l border-[#555]" />
    </div>
  </footer>
);

export default function App() {
  return (
    <div className="min-h-screen flex flex-col bg-[#f0f0f0] font-['Noto_Sans',sans-serif] overflow-x-hidden">
      <TitleBar />
      <MenuBar />
      <StandardBar />
      <LineBar />
      <ChartWindow />
      <ChartTabs />
      <StatusBar />
      <TaskBar />
    </div>
  );
}
